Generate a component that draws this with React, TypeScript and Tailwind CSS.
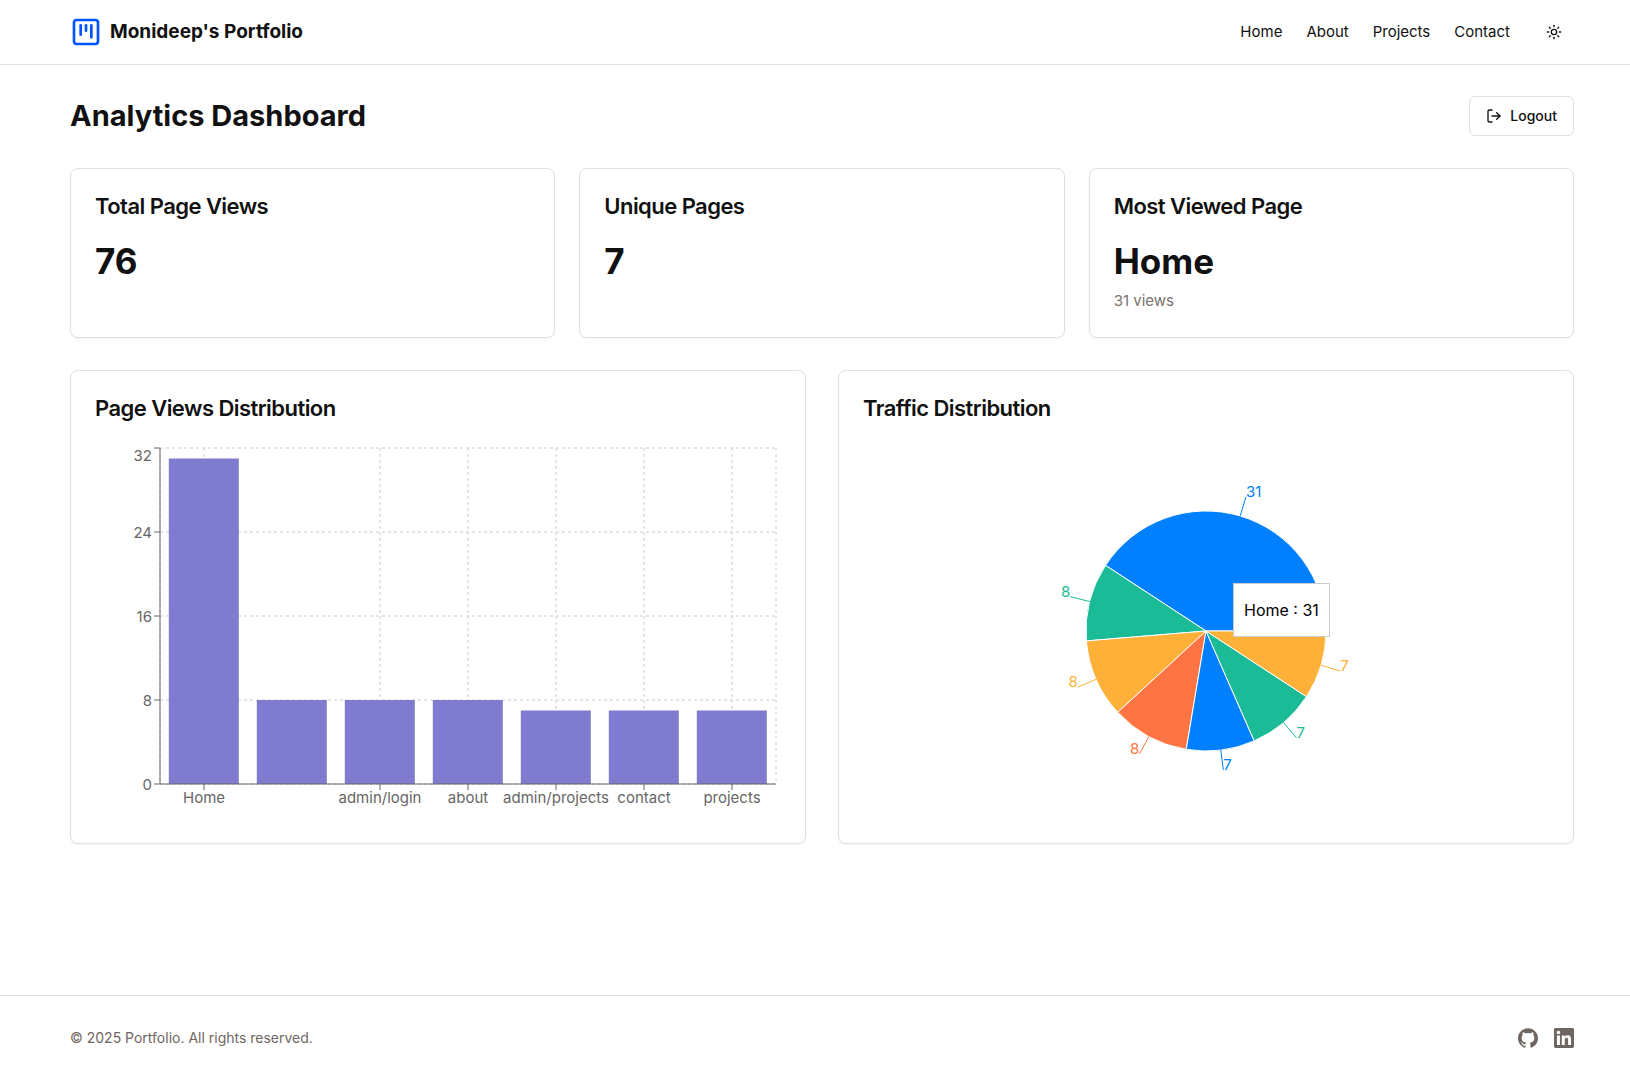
import type { ReactNode } from "react";
import { LogOut, SquareKanban, Sun } from "lucide-react";

const views = [
  { page: "Home", count: 31 },
  { page: "", count: 8 },
  { page: "admin/login", count: 8 },
  { page: "about", count: 8 },
  { page: "admin/projects", count: 7 },
  { page: "contact", count: 7 },
  { page: "projects", count: 7 },
];

const sliceColors = ["#0080fe", "#1abb96", "#ffb038", "#ff7443"];

function Shell({ children, className = "" }: { children: ReactNode; className?: string }) {
  return (
    <div className="pl-[70px] pr-14">
      <div className={"mx-auto w-full max-w-[1504px] " + className}>{children}</div>
    </div>
  );
}

function Card({ title, children }: { title: string; children: ReactNode }) {
  return (
    <section className="rounded-lg border border-[#e0e0e0] bg-white p-6 shadow-xs">
      <h2 className="text-[22px] leading-[26px] font-semibold tracking-tight">{title}</h2>
      <div className="mt-[22px]">{children}</div>
    </section>
  );
}

function BarChart() {
  const left = 65;
  const right = 681;
  const top = 5;
  const bottom = 341;
  const band = (right - left) / views.length;
  const yOf = (v: number) => bottom - ((bottom - top) * v) / 32;
  const ticks = [0, 8, 16, 24, 32];
  const named = views
    .map((v, i) => ({ page: v.page, x: left + band * (i + 0.5) }))
    .filter((v) => v.page !== "");
  return (
    <svg viewBox="0 0 686 376" className="h-[376px] w-full text-[15px]" role="img" aria-label="Page views by page">
      <g stroke="#ccc" strokeDasharray="3 3">
        {ticks.map((t) => (
          <line key={t} x1={left} x2={right} y1={yOf(t)} y2={yOf(t)} />
        ))}
        {[left, ...named.map((n) => n.x), right].map((x) => (
          <line key={x} x1={x} x2={x} y1={top} y2={bottom} />
        ))}
      </g>
      <g fill="#7f7bcf">
        {views.map((v, i) => (
          <rect key={i} x={left + band * i + band / 10} width={70} y={yOf(v.count)} height={bottom - yOf(v.count)} />
        ))}
      </g>
      <g stroke="#666">
        <line x1={left} x2={right} y1={bottom} y2={bottom} />
        <line x1={left} x2={left} y1={top} y2={bottom} />
        {ticks.map((t) => (
          <line key={t} x1={left - 6} x2={left} y1={yOf(t)} y2={yOf(t)} />
        ))}
        {named.map((n) => (
          <line key={n.page} x1={n.x} x2={n.x} y1={bottom} y2={bottom + 6} />
        ))}
      </g>
      <g fill="#666">
        {ticks.map((t) => (
          <text key={t} x={left - 8} y={Math.max(yOf(t), 12) + 6} textAnchor="end">
            {t}
          </text>
        ))}
        {named.map((n) => (
          <text key={n.page} x={n.x} y={bottom + 19} textAnchor="middle">
            {n.page}
          </text>
        ))}
      </g>
    </svg>
  );
}

function PieChart() {
  const cx = 343;
  const cy = 188;
  const total = views.reduce((sum, v) => sum + v.count, 0);
  const at = (angle: number, r: number) => ({
    x: cx + r * Math.cos(angle),
    y: cy - r * Math.sin(angle),
  });
  let start = 0;
  const slices = views.map((v, i) => {
    const sweep = (v.count / total) * 2 * Math.PI;
    const from = at(start, 120);
    const to = at(start + sweep, 120);
    const mid = start + sweep / 2;
    start += sweep;
    return {
      color: sliceColors[i % sliceColors.length],
      count: v.count,
      path: `M${cx},${cy}L${from.x},${from.y}A120,120 0 0 0 ${to.x},${to.y}Z`,
      edge: at(mid, 120),
      label: at(mid, 140),
    };
  });
  return (
    <div className="relative">
      <svg viewBox="0 0 686 376" className="h-[376px] w-full text-[15px]" role="img" aria-label="Traffic by page">
        {slices.map((s, i) => (
          <path key={i} d={s.path} fill={s.color} stroke="#fff" />
        ))}
        {slices.map((s, i) => (
          <g key={i}>
            <line x1={s.edge.x} y1={s.edge.y} x2={s.label.x} y2={s.label.y} stroke={s.color} />
            <text x={s.label.x} y={s.label.y} fill={s.color} textAnchor={s.label.x > cx ? "start" : "end"}>
              {s.count}
            </text>
          </g>
        ))}
      </svg>
      <div
        role="tooltip"
        className="absolute top-[140px] left-[calc(50%+27px)] border border-[#ccc] bg-white px-2.5 py-3.5 text-base leading-6 whitespace-nowrap text-black"
      >
        Home : 31
      </div>
    </div>
  );
}

function GithubIcon() {
  return (
    <svg viewBox="0 0 24 24" fill="currentColor" className="size-5" aria-hidden="true">
      <path d="M12 .297c-6.63 0-12 5.373-12 12 0 5.303 3.438 9.8 8.205 11.385.6.113.82-.258.82-.577 0-.285-.01-1.04-.015-2.04-3.338.724-4.042-1.61-4.042-1.61C4.422 18.07 3.633 17.7 3.633 17.7c-1.087-.744.084-.729.084-.729 1.205.084 1.838 1.236 1.838 1.236 1.07 1.835 2.809 1.305 3.495.998.108-.776.417-1.305.76-1.605-2.665-.3-5.466-1.332-5.466-5.93 0-1.31.465-2.38 1.235-3.22-.135-.303-.54-1.523.105-3.176 0 0 1.005-.322 3.3 1.23.96-.267 1.98-.399 3-.405 1.02.006 2.04.138 3 .405 2.28-1.552 3.285-1.23 3.285-1.23.645 1.653.24 2.873.12 3.176.765.84 1.23 1.91 1.23 3.22 0 4.61-2.805 5.625-5.475 5.92.42.36.81 1.096.81 2.22 0 1.606-.015 2.896-.015 3.286 0 .315.21.69.825.57C20.565 22.092 24 17.592 24 12.297c0-6.627-5.373-12-12-12" />
    </svg>
  );
}

function LinkedinIcon() {
  return (
    <svg viewBox="0 0 24 24" fill="currentColor" className="size-5" aria-hidden="true">
      <path d="M20.447 20.452h-3.554v-5.569c0-1.328-.027-3.037-1.852-3.037-1.853 0-2.136 1.445-2.136 2.939v5.667H9.351V9h3.414v1.561h.046c.477-.9 1.637-1.85 3.37-1.85 3.601 0 4.267 2.37 4.267 5.455v6.286zM5.337 7.433c-1.144 0-2.063-.926-2.063-2.065 0-1.138.92-2.063 2.063-2.063 1.14 0 2.064.925 2.064 2.063 0 1.139-.925 2.065-2.064 2.065zm1.782 13.019H3.555V9h3.564v11.452zM22.225 0H1.771C.792 0 0 .774 0 1.729v20.542C0 23.227.792 24 1.771 24h20.451C23.2 24 24 23.227 24 22.271V1.729C24 .774 23.2 0 22.222 0h.003z" />
    </svg>
  );
}

export default function App() {
  return (
    <div className="flex min-h-screen flex-col bg-white font-['Inter',sans-serif] text-[#111]">
      <header className="border-b border-[#e0e0e0]">
        <Shell className="flex h-16 items-center justify-between">
          <a href="#" className="flex items-center gap-2">
            <SquareKanban className="size-8 text-[#0055ff]" />
            <span className="text-[19px] font-bold">Monideep's Portfolio</span>
          </a>
          <nav className="flex items-center gap-6 text-[15px]">
            {["Home", "About", "Projects", "Contact"].map((item) => (
              <a key={item} href="#">
                {item}
              </a>
            ))}
            <button type="button" aria-label="Toggle theme" className="flex size-10 items-center justify-center">
              <Sun className="size-4" />
            </button>
          </nav>
        </Shell>
      </header>

      <main className="grow pt-[31px] pb-8">
        <Shell>
          <div className="flex items-center justify-between">
            <h1 className="text-[29px] leading-9 font-bold">Analytics Dashboard</h1>
            <button
              type="button"
              className="flex h-10 items-center gap-2 rounded-md border border-[#e0e0e0] px-4 text-sm font-medium"
            >
              <LogOut className="size-4" />
              Logout
            </button>
          </div>

          <div className="mt-8 grid grid-cols-3 gap-6">
            <Card title="Total Page Views">
              <p className="text-[35px] leading-10 font-bold">76</p>
            </Card>
            <Card title="Unique Pages">
              <p className="text-[35px] leading-10 font-bold">7</p>
            </Card>
            <Card title="Most Viewed Page">
              <p className="text-[35px] leading-10 font-bold">Home</p>
              <p className="mt-2 text-[15px] leading-6 text-[#78716c]">31 views</p>
            </Card>
          </div>

          <div className="mt-8 grid grid-cols-2 gap-8">
            <Card title="Page Views Distribution">
              <BarChart />
            </Card>
            <Card title="Traffic Distribution">
              <PieChart />
            </Card>
          </div>
        </Shell>
      </main>

      <footer className="h-20 border-t border-[#e0e0e0] text-[#6f6661]">
        <Shell className="flex items-center justify-between pt-8">
          <p className="text-sm leading-5">© 2025 Portfolio. All rights reserved.</p>
          <div className="flex gap-4">
            <a href="#" aria-label="GitHub">
              <GithubIcon />
            </a>
            <a href="#" aria-label="LinkedIn">
              <LinkedinIcon />
            </a>
          </div>
        </Shell>
      </footer>
    </div>
  );
}
